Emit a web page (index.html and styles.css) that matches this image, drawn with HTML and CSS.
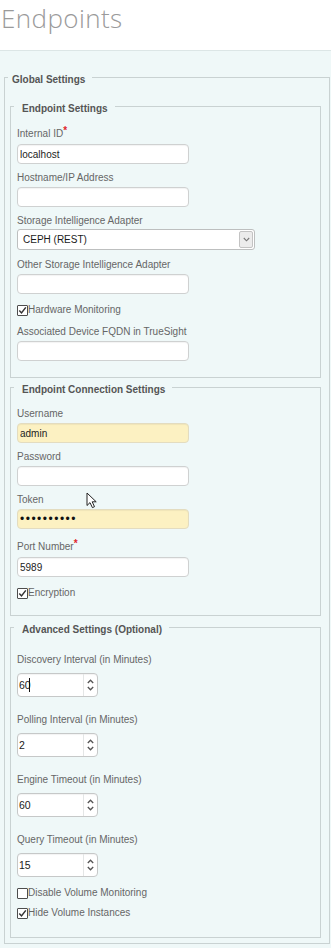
FILE: index.html
```html
<!DOCTYPE html>
<html lang="en">
<head>
<meta charset="utf-8">
<title>Endpoints</title>
<link rel="stylesheet" href="styles.css">
</head>
<body>
<h1 class="page-title">Endpoints</h1>
<div class="panel">
  <fieldset class="group group-global">
    <legend>Global Settings</legend>

    <fieldset class="group group-endpoint">
      <legend>Endpoint Settings</legend>
      <div class="field field-req">
        <label class="label">Internal ID<span class="req">*</span></label>
        <input class="text" type="text" value="localhost">
      </div>
      <div class="field">
        <label class="label">Hostname/IP Address</label>
        <input class="text" type="text" value="">
      </div>
      <div class="field field-select">
        <label class="label">Storage Intelligence Adapter</label>
        <div class="select">
          <span class="select-value">CEPH (REST)</span>
          <span class="select-btn">
            <svg width="7" height="5" viewBox="0 0 7 5"><path d="M0.8 1 L3.5 3.8 L6.2 1" fill="none" stroke="#777" stroke-width="1.1"/></svg>
          </span>
        </div>
      </div>
      <div class="field">
        <label class="label">Other Storage Intelligence Adapter</label>
        <input class="text" type="text" value="">
      </div>
      <div class="check">
        <span class="cb checked"><svg width="9" height="9" viewBox="0 0 9 9"><path d="M1.3 4.6 L3.5 6.9 L7.8 1.4" fill="none" stroke="#333" stroke-width="1.5"/></svg></span>
        <span>Hardware Monitoring</span>
      </div>
      <div class="field">
        <label class="label">Associated Device FQDN in TrueSight</label>
        <input class="text" type="text" value="">
      </div>
    </fieldset>

    <fieldset class="group group-conn">
      <legend>Endpoint Connection Settings</legend>
      <div class="field">
        <label class="label">Username</label>
        <input class="text autofill" type="text" value="admin">
      </div>
      <div class="field">
        <label class="label">Password</label>
        <input class="text" type="password" value="">
      </div>
      <div class="field">
        <label class="label">Token</label>
        <input class="text autofill password" type="password" value="abcdefghij">
      </div>
      <div class="field field-req field-port">
        <label class="label">Port Number<span class="req">*</span></label>
        <input class="text" type="text" value="5989">
      </div>
      <div class="check">
        <span class="cb checked"><svg width="9" height="9" viewBox="0 0 9 9"><path d="M1.3 4.6 L3.5 6.9 L7.8 1.4" fill="none" stroke="#333" stroke-width="1.5"/></svg></span>
        <span>Encryption</span>
      </div>
      <svg class="mouse" width="12" height="17" viewBox="0 0 12 17"><path d="M1 1 L1 13.5 L4 10.6 L6.4 15.6 L8.5 14.7 L6.2 9.8 L10.2 9.8 Z" fill="#fff" stroke="#222" stroke-width="1" stroke-linejoin="round"/></svg>
    </fieldset>

    <fieldset class="group group-adv">
      <legend>Advanced Settings (Optional)</legend>
      <div class="field-num">
        <label class="label">Discovery Interval (in Minutes)</label>
        <div class="num">
          <input class="num-input" type="text" value="60">
          <span class="caret"></span>
          <span class="spin">
            <svg width="7" height="5" viewBox="0 0 7 5"><path d="M0.8 4 L3.5 1.2 L6.2 4" fill="none" stroke="#555" stroke-width="1.3"/></svg>
            <svg width="7" height="5" viewBox="0 0 7 5"><path d="M0.8 1 L3.5 3.8 L6.2 1" fill="none" stroke="#555" stroke-width="1.3"/></svg>
          </span>
        </div>
      </div>
      <div class="field-num">
        <label class="label">Polling Interval (in Minutes)</label>
        <div class="num">
          <input class="num-input" type="text" value="2">
          <span class="spin">
            <svg width="7" height="5" viewBox="0 0 7 5"><path d="M0.8 4 L3.5 1.2 L6.2 4" fill="none" stroke="#555" stroke-width="1.3"/></svg>
            <svg width="7" height="5" viewBox="0 0 7 5"><path d="M0.8 1 L3.5 3.8 L6.2 1" fill="none" stroke="#555" stroke-width="1.3"/></svg>
          </span>
        </div>
      </div>
      <div class="field-num">
        <label class="label">Engine Timeout (in Minutes)</label>
        <div class="num">
          <input class="num-input" type="text" value="60">
          <span class="spin">
            <svg width="7" height="5" viewBox="0 0 7 5"><path d="M0.8 4 L3.5 1.2 L6.2 4" fill="none" stroke="#555" stroke-width="1.3"/></svg>
            <svg width="7" height="5" viewBox="0 0 7 5"><path d="M0.8 1 L3.5 3.8 L6.2 1" fill="none" stroke="#555" stroke-width="1.3"/></svg>
          </span>
        </div>
      </div>
      <div class="field-num">
        <label class="label">Query Timeout (in Minutes)</label>
        <div class="num">
          <input class="num-input" type="text" value="15">
          <span class="spin">
            <svg width="7" height="5" viewBox="0 0 7 5"><path d="M0.8 4 L3.5 1.2 L6.2 4" fill="none" stroke="#555" stroke-width="1.3"/></svg>
            <svg width="7" height="5" viewBox="0 0 7 5"><path d="M0.8 1 L3.5 3.8 L6.2 1" fill="none" stroke="#555" stroke-width="1.3"/></svg>
          </span>
        </div>
      </div>
      <div class="check">
        <span class="cb"></span>
        <span>Disable Volume Monitoring</span>
      </div>
      <div class="check">
        <span class="cb checked"><svg width="9" height="9" viewBox="0 0 9 9"><path d="M1.3 4.6 L3.5 6.9 L7.8 1.4" fill="none" stroke="#333" stroke-width="1.5"/></svg></span>
        <span>Hide Volume Instances</span>
      </div>
    </fieldset>
  </fieldset>
</div>
</body>
</html>
```

FILE: styles.css
```css
* { box-sizing: border-box; }

body {
  margin: 0;
  background: #ffffff;
  font-family: "Liberation Sans", Arial, sans-serif;
  font-size: 10px;
  color: #666666;
}

.page-title {
  margin: 0;
  height: 50px;
  padding-left: 1px;
  font-family: "Open Sans", "Liberation Sans", sans-serif;
  font-weight: 300;
  font-size: 26px;
  line-height: normal;
  letter-spacing: 0.4px;
  color: #9a9a9a;
}

.panel {
  border-top: 1px solid #dce6e6;
  background: #eff8f8;
  padding: 17px 1px 4px 4px;
}

fieldset.group {
  margin: 0;
  min-width: 0;
  border: 1px solid #c9d2d2;
  padding: 11px 8px 9px 6px;
}

fieldset.group legend {
  margin-left: -3px;
  padding: 5px 7px 0 8px;
  font-weight: bold;
  font-size: 10px;
  line-height: 14px;
  color: #555555;
}

.group-global {
  padding: 10px 8px 5px 5px !important;
}

.group-global > legend {
  margin-left: -2px !important;
  padding-left: 4px !important;
}

.group-conn {
  position: relative;
  padding-top: 10px !important;
  padding-bottom: 9px !important;
}

.group-adv {
  margin-top: 2px !important;
  padding-top: 16px !important;
  padding-bottom: 11px !important;
}

.field { margin-bottom: 7px; }
.field-select { margin-bottom: 8px; }
.field-port { margin-top: 11px; }

.label {
  display: block;
  line-height: 14px;
  margin-bottom: 2px;
  color: #666666;
  white-space: nowrap;
}

.field-req .label { margin-bottom: 3px; }
.field-select .label { margin-bottom: 1px; }

.req {
  color: #e0262b;
  font-weight: bold;
  font-size: 10px;
  line-height: 8px;
  vertical-align: top;
}

.text {
  display: block;
  width: 172px;
  height: 20px;
  margin: 0;
  border: 1px solid #cfd1d1;
  border-radius: 4px;
  padding: 0 2px;
  background: #ffffff;
  box-shadow: inset 0 1px 1px rgba(0, 0, 0, 0.05);
  font-family: "Liberation Sans", Arial, sans-serif;
  font-size: 10px;
  color: #222222;
  outline: none;
}

.text.autofill {
  background: #fcf1c2;
  border-color: #e3dcc0;
}

.text.password {
  font-size: 12px;
  letter-spacing: 1.5px;
  color: #111111;
}

.select {
  display: flex;
  align-items: stretch;
  width: 238px;
  height: 21px;
  border: 1px solid #bdbfbf;
  border-radius: 3px;
  background: #ffffff;
}

.select-value {
  flex: 1;
  padding-left: 5px;
  line-height: 19px;
  color: #1a1a1a;
}

.select-btn {
  width: 14px;
  margin: 1px;
  display: flex;
  align-items: center;
  justify-content: center;
  background: #ececec;
  border: 1px solid #c3c3c3;
  border-radius: 2px;
}

.check {
  display: flex;
  align-items: center;
  line-height: 14px;
  margin: 9px 0 6px;
  color: #666666;
}

.check + .check { margin-top: 6px; }
.check + .field { margin-top: 8px; }

.cb {
  width: 11px;
  height: 11px;
  border: 1px solid #4d4d4d;
  border-radius: 1px;
  background: #ffffff;
  display: inline-flex;
  align-items: center;
  justify-content: center;
  flex: none;
}

.field-num { margin-bottom: 9px; }
.field-num + .field-num { margin-top: 16px; }
.field-num .label { margin-bottom: 6px; }

.num {
  position: relative;
  display: flex;
  width: 81px;
  height: 24px;
  border: 1px solid #c6c8c8;
  border-radius: 4px;
  background: #ffffff;
  box-shadow: inset 0 1px 1px rgba(0, 0, 0, 0.05);
}

.num-input {
  flex: 1;
  min-width: 0;
  margin: 0;
  border: 0;
  padding: 0 0 0 1px;
  background: transparent;
  font-family: "Liberation Sans", Arial, sans-serif;
  font-size: 10.5px;
  color: #1a1a1a;
  outline: none;
}

.caret {
  position: absolute;
  left: 11px;
  top: 4px;
  width: 1px;
  height: 14px;
  background: #111111;
}

.spin {
  width: 14px;
  flex: none;
  border-left: 1px solid #e4e6e6;
  display: flex;
  flex-direction: column;
  align-items: center;
  justify-content: center;
  gap: 2px;
}

.mouse {
  position: absolute;
  left: 75px;
  top: 95px;
}
```
